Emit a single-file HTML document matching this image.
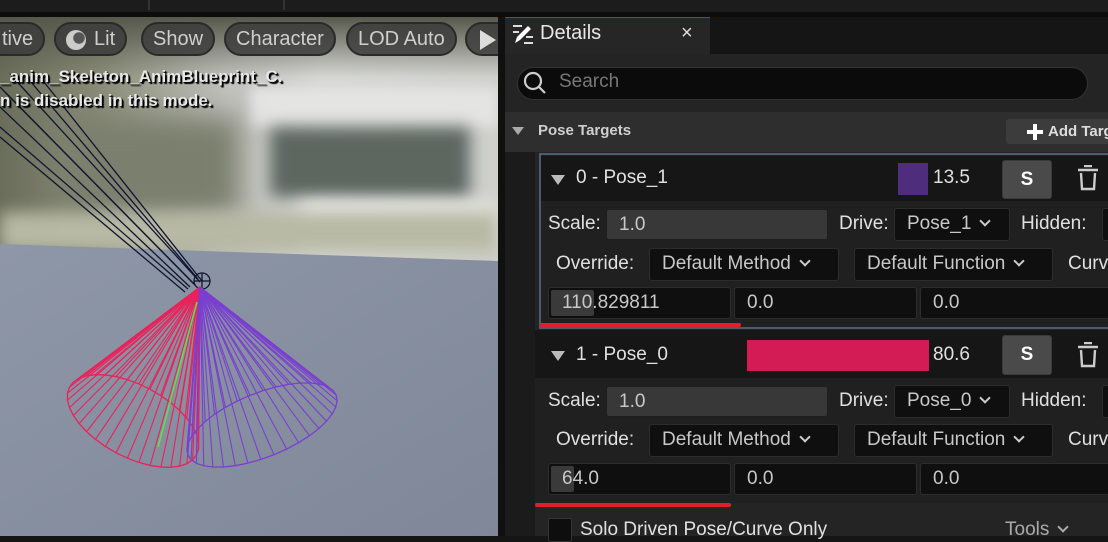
<!DOCTYPE html>
<html><head><meta charset="utf-8"><style>
*{margin:0;padding:0;box-sizing:border-box}
body{width:1108px;height:536px;overflow:hidden;background:#151515;font-family:"Liberation Sans",sans-serif;position:relative;color:#ddd}
.a{position:absolute}
.pill{position:absolute;top:22px;height:34px;border-radius:17px;background:rgba(60,60,60,.85);border:2px solid #2a2a2a;color:#cfcfcf;font-size:20px;line-height:30px;padding:0 10px}
.fld{position:absolute;background:#0f0f0f;border:1px solid #2c2c2c;border-radius:3px;color:#c8c8c8;font-size:19px;line-height:30px;padding-left:12px;white-space:nowrap}
.lbl{position:absolute;color:#e0e0e0;font-size:19px;white-space:nowrap}
.chev{display:inline-block;width:8px;height:8px;border-right:2px solid #ccc;border-bottom:2px solid #ccc;transform:rotate(45deg);margin-left:10px;position:relative;top:-4px}
.tri{position:absolute;width:0;height:0;border-left:7px solid transparent;border-right:7px solid transparent;border-top:10px solid #bbb}
.sbtn{position:absolute;background:#4a4a4a;border:1px solid #3a3a3a;border-radius:3px;color:#fff;font-weight:bold;font-size:19px;text-align:center;line-height:38px}
.vs{text-shadow:1px 1px 1px #000,2px 2px 1px #000;color:#e8e8e8;font-weight:bold;font-size:17px;white-space:nowrap}
</style></head><body>
<div class="a" style="left:0;top:0;width:1108px;height:12px;background:#1c1c1c"></div>
<div class="a" style="left:148px;top:0;width:2px;height:10px;background:#333"></div>
<div class="a" style="left:283px;top:0;width:2px;height:10px;background:#333"></div>
<div class="a" style="left:0;top:12px;width:1108px;height:5px;background:#0c0c0c"></div>
<div class="a" style="left:0;top:17px;width:498px;height:519px;overflow:hidden;background:linear-gradient(90deg,#6a6d5a 0%,#8a8c78 20%,#bfc0bb 45%,#d6d7d4 65%,#cfd0cc 100%)">
 <div class="a" style="left:0;top:0;width:498px;height:60px;background:linear-gradient(180deg,#55584a,rgba(120,125,110,0))"></div>
 <div class="a" style="left:250px;top:70px;width:248px;height:40px;background:#e4e4e2;filter:blur(6px)"></div>
 <div class="a" style="left:270px;top:110px;width:200px;height:70px;background:#5d6760;filter:blur(8px)"></div>
 <div class="a" style="left:60px;top:100px;width:180px;height:100px;background:#7b7f6d;filter:blur(14px)"></div>
 <div class="a" style="left:300px;top:185px;width:198px;height:40px;background:#e8e9e4;filter:blur(8px)"></div>
 <div class="a" style="left:0;top:195px;width:498px;height:40px;background:#b7b9a4;filter:blur(8px)"></div>
 <svg class="a" style="left:0;top:0" width="498" height="519">
  <defs><linearGradient id="fl" x1="0" y1="0" x2="1" y2="1"><stop offset="0" stop-color="#8e97a8"/><stop offset="1" stop-color="#7f8799"/></linearGradient></defs>
  <polygon points="0,227 498,244 498,519 0,519" fill="url(#fl)"/>
  <g stroke="#101530" stroke-width="1.3" fill="none">
   <line x1="0" y1="70" x2="195" y2="268"/><line x1="0" y1="90" x2="190" y2="270"/>
   <line x1="10" y1="57" x2="200" y2="265"/><line x1="0" y1="110" x2="188" y2="272"/>
   <line x1="25" y1="58" x2="198" y2="262"/><line x1="40" y1="60" x2="202" y2="264"/>
   <line x1="0" y1="120" x2="185" y2="275"/><line x1="5" y1="75" x2="193" y2="266"/>
   <circle cx="202" cy="264" r="8"/><line x1="194" y1="264" x2="210" y2="264"/><line x1="202" y1="256" x2="202" y2="272"/>
  </g>
  <g id="cones"></g>
 </svg>
 <div class="a vs" style="left:0;top:50px">_anim_Skeleton_AnimBlueprint_C.</div>
 <div class="a vs" style="left:0;top:74px">n is disabled in this mode.</div>
</div>
<div class="pill" style="left:-20px;padding-left:20px">tive</div>
<div class="pill" style="left:54px;padding-left:38px">Lit<span class="a" style="left:10px;top:6px;width:20px;height:20px;border-radius:50%;background:radial-gradient(circle at 65% 40%,#555 30%,#ccc 35%)"></span></div>
<div class="pill" style="left:141px">Show</div>
<div class="pill" style="left:224px">Character</div>
<div class="pill" style="left:346px">LOD Auto</div>
<div class="pill" style="left:465px;width:50px;padding:0"><span class="a" style="left:13px;top:6px;border-left:16px solid #ddd;border-top:10px solid transparent;border-bottom:10px solid transparent"></span></div>
<div class="a" style="left:498px;top:17px;width:7px;height:519px;background:#101010"></div>
<div class="a" style="left:505px;top:17px;width:205px;height:37px;background:#262626;border-top:1px solid #3a5a80"></div>
<svg class="a" style="left:512px;top:23px" width="22" height="22"><g stroke="#ddd" stroke-width="2"><line x1="1" y1="3" x2="10" y2="3"/><line x1="1" y1="9" x2="7" y2="9"/><line x1="12" y1="20" x2="21" y2="20"/><line x1="14" y1="14" x2="21" y2="14"/></g><path d="M3 20 L5 14 L16 3 L19 6 L8 17 Z" fill="#fff"/></svg>
<div class="a" style="left:540px;top:22px;font-size:20px;color:#e8e8e8">Details</div>
<div class="a" style="left:681px;top:22px;font-size:20px;color:#ddd">×</div>
<div class="a" style="left:505px;top:54px;width:603px;height:482px;background:#242424"></div>
<div class="a" style="left:517px;top:67px;width:571px;height:33px;border-radius:17px;background:#0b0b0b;border:1px solid #333"></div>
<svg class="a" style="left:522px;top:70px" width="26" height="26"><circle cx="11" cy="11" r="8" stroke="#ccc" stroke-width="2.2" fill="none"/><line x1="17" y1="17" x2="23" y2="23" stroke="#ccc" stroke-width="2.2"/></svg>
<div class="a" style="left:559px;top:71px;font-size:19px;color:#777">Search</div>
<div class="a" style="left:505px;top:112px;width:603px;height:40px;background:#2e2e2e"></div>
<div class="tri" style="left:512px;top:127px;border-top-color:#aaa;border-left-width:6px;border-right-width:6px;border-top-width:8px"></div>
<div class="a" style="left:538px;top:122px;font-size:15px;font-weight:bold;color:#cfcfcf">Pose Targets</div>
<div class="a" style="left:1006px;top:119px;width:110px;height:25px;background:#3c3c3c;border-radius:3px;color:#ddd;font-size:15px;font-weight:bold;line-height:25px;padding-left:42px;white-space:nowrap;overflow:hidden">Add Target</div>
<div class="a" style="left:1027px;top:130px;width:16px;height:4px;background:#fff"></div><div class="a" style="left:1033px;top:124px;width:4px;height:16px;background:#fff"></div>
<div class="a" style="left:505px;top:152px;width:30px;height:384px;background:#1b1b1b"></div>
<div class="a" style="left:539px;top:153px;width:575px;height:176px;border:2px solid #4b5b70;background:#202020"></div>
<div class="a" style="left:541px;top:156px;width:567px;height:45px;background:#161616"></div>
<div class="tri" style="left:551px;top:175px"></div>
<div class="lbl" style="left:576px;top:167px">0 - Pose_1</div>
<div class="a" style="left:898px;top:163px;width:30px;height:32px;background:#4f2d7d"></div>
<div class="lbl" style="left:933px;top:167px">13.5</div>
<div class="sbtn" style="left:1002px;top:160px;width:50px;height:39px">S</div>
<svg class="a" style="left:1077px;top:165px" width="22" height="26"><g stroke="#ccc" stroke-width="2.4" fill="none"><line x1="1" y1="5" x2="21" y2="5"/><line x1="7" y1="1" x2="15" y2="1"/><path d="M4 8 L5 24 L17 24 L18 8"/></g></svg>
<div class="lbl" style="left:548px;top:213px">Scale:</div>
<div class="fld" style="left:606px;top:209px;width:222px;height:31px;background:#383838;border-color:#1e1e1e">1.0</div>
<div class="lbl" style="left:839px;top:213px">Drive:</div>
<div class="fld" style="left:894px;top:208px;width:116px;height:33px">Pose_1<span class="chev"></span></div>
<div class="lbl" style="left:1021px;top:213px">Hidden:</div>
<div class="fld" style="left:1102px;top:208px;width:20px;height:33px"></div>
<div class="lbl" style="left:556px;top:253px">Override:</div>
<div class="fld" style="left:649px;top:248px;width:190px;height:33px">Default Method<span class="chev"></span></div>
<div class="fld" style="left:854px;top:248px;width:199px;height:33px">Default Function<span class="chev"></span></div>
<div class="lbl" style="left:1068px;top:253px">Curv</div>
<div class="fld" style="left:548px;top:287px;width:183px;height:32px;padding-left:13px"><span class="a" style="left:2px;top:2px;width:43px;height:26px;background:#3a3a3a;border-radius:2px"></span><span style="position:relative">110.829811</span></div>
<div class="fld" style="left:734px;top:287px;width:183px;height:32px">0.0</div>
<div class="fld" style="left:920px;top:287px;width:190px;height:32px">0.0</div>
<div class="a" style="left:540px;top:323px;width:201px;height:4px;border-radius:2px;background:#e01f2d"></div>
<div class="a" style="left:535px;top:330px;width:573px;height:48px;background:#161616"></div>
<div class="tri" style="left:551px;top:351px"></div>
<div class="lbl" style="left:576px;top:344px">1 - Pose_0</div>
<div class="a" style="left:747px;top:340px;width:182px;height:31px;background:#d31c55"></div>
<div class="lbl" style="left:933px;top:344px">80.6</div>
<div class="sbtn" style="left:1002px;top:335px;width:50px;height:40px">S</div>
<svg class="a" style="left:1077px;top:342px" width="22" height="26"><g stroke="#ccc" stroke-width="2.4" fill="none"><line x1="1" y1="5" x2="21" y2="5"/><line x1="7" y1="1" x2="15" y2="1"/><path d="M4 8 L5 24 L17 24 L18 8"/></g></svg>
<div class="a" style="left:535px;top:378px;width:573px;height:125px;background:#202020"></div>
<div class="lbl" style="left:548px;top:390px">Scale:</div>
<div class="fld" style="left:606px;top:386px;width:222px;height:31px;background:#383838;border-color:#1e1e1e">1.0</div>
<div class="lbl" style="left:839px;top:390px">Drive:</div>
<div class="fld" style="left:894px;top:385px;width:116px;height:33px">Pose_0<span class="chev"></span></div>
<div class="lbl" style="left:1021px;top:390px">Hidden:</div>
<div class="fld" style="left:1102px;top:385px;width:20px;height:33px"></div>
<div class="lbl" style="left:556px;top:429px">Override:</div>
<div class="fld" style="left:649px;top:424px;width:190px;height:33px">Default Method<span class="chev"></span></div>
<div class="fld" style="left:854px;top:424px;width:199px;height:33px">Default Function<span class="chev"></span></div>
<div class="lbl" style="left:1068px;top:429px">Curv</div>
<div class="fld" style="left:548px;top:463px;width:183px;height:32px;padding-left:13px"><span class="a" style="left:2px;top:2px;width:23px;height:26px;background:#3a3a3a;border-radius:2px"></span><span style="position:relative">64.0</span></div>
<div class="fld" style="left:734px;top:463px;width:183px;height:32px">0.0</div>
<div class="fld" style="left:920px;top:463px;width:190px;height:32px">0.0</div>
<div class="a" style="left:535px;top:503px;width:196px;height:4px;border-radius:2px;background:#e01f2d"></div>
<div class="a" style="left:548px;top:518px;width:24px;height:24px;background:#0e0e0e;border:1px solid #333;border-radius:2px"></div>
<div class="lbl" style="left:580px;top:519px">Solo Driven Pose/Curve Only</div>
<div class="lbl" style="left:1005px;top:519px;color:#aaa">Tools<span class="chev" style="border-color:#aaa"></span></div>
<script>
(function(){
var g=document.getElementById('cones'),ns='http://www.w3.org/2000/svg',ax=200,ay=270;
function cone(cx,cy,rx,ry,rot,col,n){
 var r=rot*Math.PI/180,pts=[];
 for(var i=0;i<=n;i++){var t=i/n*2*Math.PI,x=rx*Math.cos(t),y=ry*Math.sin(t);
  pts.push([cx+x*Math.cos(r)-y*Math.sin(r),cy+x*Math.sin(r)+y*Math.cos(r)]);}
 var e=document.createElementNS(ns,'polyline');
 e.setAttribute('points',pts.map(function(p){return p.join(',')}).join(' '));
 e.setAttribute('fill','none');e.setAttribute('stroke',col);e.setAttribute('stroke-width','1.3');g.appendChild(e);
 for(var i=0;i<n;i++){var l=document.createElementNS(ns,'line');
  l.setAttribute('x1',ax);l.setAttribute('y1',ay);l.setAttribute('x2',pts[i][0]);l.setAttribute('y2',pts[i][1]);
  l.setAttribute('stroke',col);l.setAttribute('stroke-width','1.1');g.appendChild(l);}
}
cone(133,404,72,36,28,'#e8235a',36);
cone(262,408,80,32,-22,'#7a3fd0',36);
var l=document.createElementNS(ns,'line');l.setAttribute('x1',197);l.setAttribute('y1',285);l.setAttribute('x2',158);l.setAttribute('y2',430);l.setAttribute('stroke','#5ee04a');l.setAttribute('stroke-width','1.6');g.appendChild(l);
})();
</script>
</body></html>
